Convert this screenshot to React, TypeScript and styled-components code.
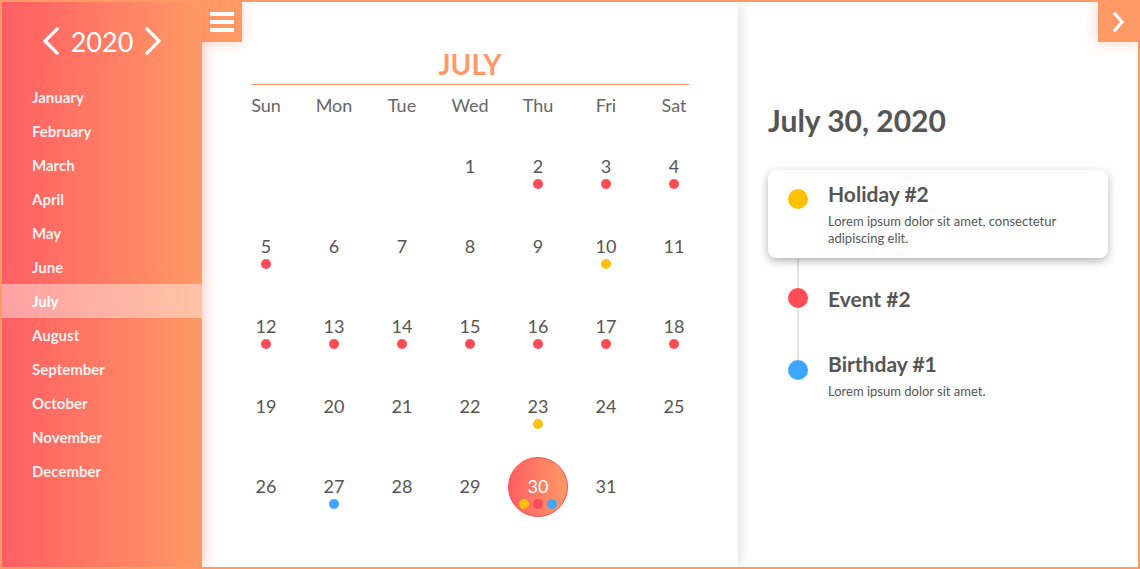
import React from "react";
import styled, { createGlobalStyle, css } from "styled-components";

const Global = createGlobalStyle`
  html, body { margin: 0; padding: 0; background: #fff; }
  body { font-family: Lato, "Noto Sans", sans-serif; }
  * { box-sizing: border-box; }
`;

const ORANGE = "#ff9966";
const RED = "#ff5e62";
const DOT = { red: "#ff4b55", yellow: "#ffc107", blue: "#3ea6ff" } as const;
type DotColor = keyof typeof DOT;

const Frame = styled.div`
  width: 1140px;
  height: 569px;
  border: 2px solid ${ORANGE};
  display: flex;
  overflow: hidden;
  position: relative;
`;

const Sidebar = styled.aside`
  width: 200px;
  flex: none;
  background: linear-gradient(to right, ${RED}, ${ORANGE});
  box-shadow: 0 0 14px rgba(255, 130, 100, 0.55);
  position: relative;
  z-index: 3;
  display: flex;
  flex-direction: column;
`;

const YearBar = styled.div`
  height: 78px;
  display: flex;
  align-items: center;
  justify-content: center;
  gap: 11px;
  color: #fff;
  font-size: 27px;
`;

const YearText = styled.span`
  line-height: 1;
`;

const MonthList = styled.ul`
  list-style: none;
  margin: 0;
  padding: 0;
`;

const MonthItem = styled.li<{ $active?: boolean }>`
  height: 34px;
  line-height: 34px;
  padding-left: 30px;
  font-size: 15px;
  font-weight: 700;
  color: rgba(255, 255, 255, 0.92);
  ${(p) =>
    p.$active &&
    css`
      background: rgba(255, 255, 255, 0.42);
      color: #fff;
    `}
`;

const CalendarPanel = styled.section`
  width: 536px;
  flex: none;
  background: #fff;
  position: relative;
  z-index: 2;
  box-shadow: 0 0 14px rgba(0, 0, 0, 0.16);
  padding: 44px 30px 0;
`;

const CornerButton = styled.button<{ $side: "left" | "right" }>`
  position: absolute;
  top: 0;
  ${(p) => (p.$side === "left" ? "left: 0;" : "right: 0;")}
  width: 40px;
  height: 40px;
  border: 0;
  padding: 0;
  background: ${ORANGE};
  box-shadow: 0 0 14px rgba(255, 140, 100, 0.4);
  display: flex;
  flex-direction: column;
  align-items: center;
  justify-content: center;
  gap: 4px;
  z-index: 4;
`;

const BurgerLine = styled.span`
  display: block;
  width: 24px;
  height: 4px;
  background: #fff;
`;

const MonthTitle = styled.h2`
  margin: 0 19px;
  text-align: center;
  color: ${ORANGE};
  font-size: 28px;
  font-weight: 700;
  line-height: 36px;
  padding-bottom: 2px;
  border-bottom: 1px solid ${ORANGE};
`;

const WeekRow = styled.div`
  display: grid;
  grid-template-columns: repeat(7, 68px);
  margin-top: 5px;
`;

const WeekDay = styled.div`
  text-align: center;
  font-size: 18px;
  line-height: 30px;
  color: #666;
`;

const DayGrid = styled.div`
  display: grid;
  grid-template-columns: repeat(7, 68px);
  grid-auto-rows: 80px;
  margin-top: 17px;
`;

const DayCell = styled.div`
  display: flex;
  justify-content: center;
`;

const DayBadge = styled.div<{ $selected?: boolean }>`
  width: 60px;
  height: 60px;
  border-radius: 50%;
  display: flex;
  flex-direction: column;
  align-items: center;
  padding-top: 17px;
  color: #555;
  ${(p) =>
    p.$selected &&
    css`
      background: linear-gradient(to right, ${RED}, ${ORANGE});
      border: 1px solid #ff4b55;
      padding-top: 16px;
      color: #fff;
    `}
`;

const DayNum = styled.span`
  font-size: 18px;
  line-height: 24px;
`;

const DotRow = styled.div`
  display: flex;
  gap: 4px;
  margin-top: 1px;
`;

const Dot = styled.span<{ $c: DotColor }>`
  width: 10px;
  height: 10px;
  border-radius: 50%;
  background: ${(p) => DOT[p.$c]};
`;

const DetailPanel = styled.section`
  flex: 1;
  background: #fff;
  position: relative;
  padding: 98px 30px 0;
`;

const DateTitle = styled.h1`
  margin: 0;
  font-size: 30px;
  line-height: 40px;
  font-weight: 700;
  color: #555;
`;

const Timeline = styled.div`
  position: relative;
  margin-top: 30px;
  display: flex;
  flex-direction: column;
  gap: 17px;
  &::before {
    content: "";
    position: absolute;
    left: 29px;
    top: 80px;
    width: 2px;
    height: 118px;
    background: #e2e2e2;
  }
`;

const EventItem = styled.div<{ $card?: boolean }>`
  position: relative;
  display: flex;
  gap: 20px;
  padding: 10px 20px;
  border-radius: 8px;
  ${(p) =>
    p.$card &&
    css`
      background: #fff;
      box-shadow: 0 3px 8px rgba(0, 0, 0, 0.3);
      min-height: 88px;
    `}
`;

const EventDot = styled.span<{ $c: DotColor; $offset: number }>`
  flex: none;
  width: 20px;
  height: 20px;
  border-radius: 50%;
  background: ${(p) => DOT[p.$c]};
  margin-top: ${(p) => p.$offset}px;
`;

const EventBody = styled.div`
  display: flex;
  flex-direction: column;
`;

const EventTitle = styled.div`
  font-size: 21px;
  line-height: 28px;
  font-weight: 700;
  color: #555;
`;

const EventDesc = styled.div`
  margin-top: 5px;
  font-size: 13px;
  line-height: 17px;
  color: #555;
  max-width: 250px;
`;

const Chevron = ({ dir, w, h }: { dir: "left" | "right"; w: number; h: number }) => {
  const pts =
    dir === "left"
      ? `${w - 3},2 3,${h / 2} ${w - 3},${h - 2}`
      : `3,2 ${w - 3},${h / 2} 3,${h - 2}`;
  return (
    <svg width={w} height={h} viewBox={`0 0 ${w} ${h}`} style={{ display: "block" }}>
      <polyline points={pts} fill="none" stroke="#fff" strokeWidth={3.2} strokeLinecap="square" />
    </svg>
  );
};

const months = [
  "January", "February", "March", "April", "May", "June", "July",
  "August", "September", "October", "November", "December",
];
const weekdays = ["Sun", "Mon", "Tue", "Wed", "Thu", "Fri", "Sat"];

const dots: Record<number, DotColor[]> = {
  2: ["red"], 3: ["red"], 4: ["red"], 5: ["red"], 10: ["yellow"],
  12: ["red"], 13: ["red"], 14: ["red"], 15: ["red"], 16: ["red"], 17: ["red"], 18: ["red"],
  23: ["yellow"], 27: ["blue"], 30: ["yellow", "red", "blue"],
};

export default function App() {
  const cells: (number | null)[] = [null, null, null];
  for (let d = 1; d <= 31; d++) cells.push(d);

  return (
    <>
      <Global />
      <Frame>
        <Sidebar>
          <YearBar>
            <Chevron dir="left" w={18} h={28} />
            <YearText>2020</YearText>
            <Chevron dir="right" w={18} h={28} />
          </YearBar>
          <MonthList>
            {months.map((m) => (
              <MonthItem key={m} $active={m === "July"}>
                {m}
              </MonthItem>
            ))}
          </MonthList>
        </Sidebar>
        <CalendarPanel>
          <CornerButton $side="left" aria-label="menu">
            <BurgerLine />
            <BurgerLine />
            <BurgerLine />
          </CornerButton>
          <MonthTitle>JULY</MonthTitle>
          <WeekRow>
            {weekdays.map((w) => (
              <WeekDay key={w}>{w}</WeekDay>
            ))}
          </WeekRow>
          <DayGrid>
            {cells.map((d, i) => (
              <DayCell key={i}>
                {d !== null && (
                  <DayBadge $selected={d === 30}>
                    <DayNum>{d}</DayNum>
                    {dots[d] && (
                      <DotRow>
                        {dots[d].map((c, j) => (
                          <Dot key={j} $c={c} />
                        ))}
                      </DotRow>
                    )}
                  </DayBadge>
                )}
              </DayCell>
            ))}
          </DayGrid>
        </CalendarPanel>
        <DetailPanel>
          <CornerButton $side="right" aria-label="next">
            <Chevron dir="right" w={13} h={20} />
          </CornerButton>
          <DateTitle>July 30, 2020</DateTitle>
          <Timeline>
            <EventItem $card>
              <EventDot $c="yellow" $offset={9} />
              <EventBody>
                <EventTitle>Holiday #2</EventTitle>
                <EventDesc>Lorem ipsum dolor sit amet, consectetur adipiscing elit.</EventDesc>
              </EventBody>
            </EventItem>
            <EventItem>
              <EventDot $c="red" $offset={3} />
              <EventBody>
                <EventTitle>Event #2</EventTitle>
              </EventBody>
            </EventItem>
            <EventItem>
              <EventDot $c="blue" $offset={10} />
              <EventBody>
                <EventTitle>Birthday #1</EventTitle>
                <EventDesc>Lorem ipsum dolor sit amet.</EventDesc>
              </EventBody>
            </EventItem>
          </Timeline>
        </DetailPanel>
      </Frame>
    </>
  );
}
